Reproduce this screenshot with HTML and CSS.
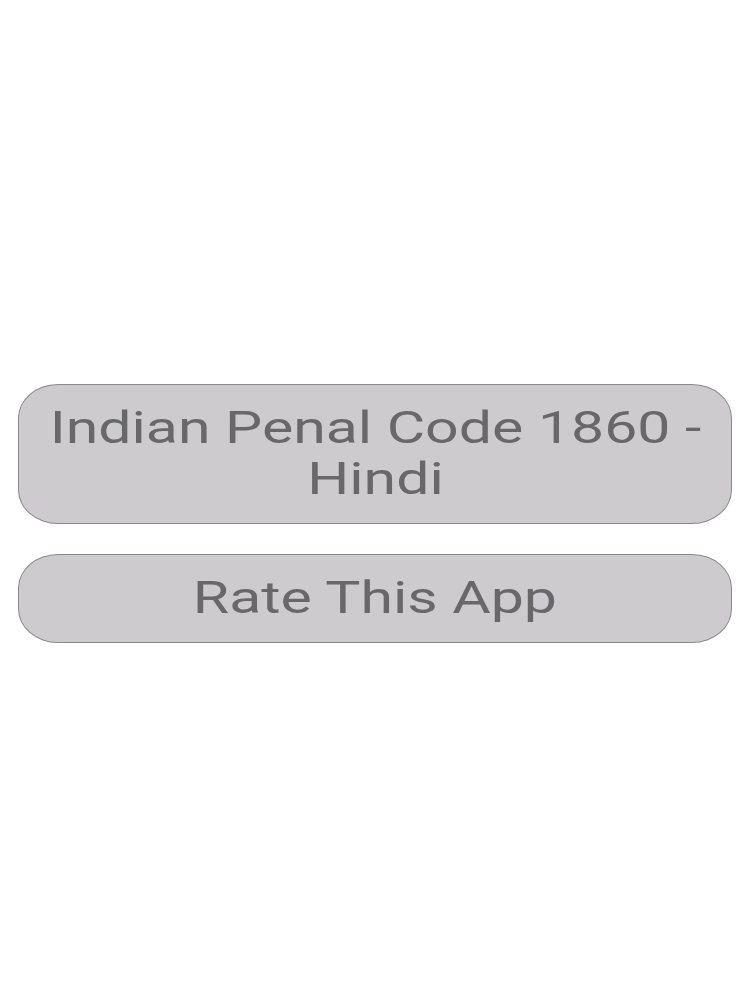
FILE: index.html
```html
<!DOCTYPE html>
<html>
<head>
<meta charset="utf-8">
<link rel="stylesheet" href="styles.css">
</head>
<body>
<div class="screen">
  <div class="menu">
    <div class="btn"><span class="label">Indian Penal Code 1860 - Hindi</span></div>
    <div class="btn"><span class="label">Rate This App</span></div>
  </div>
</div>
</body>
</html>
```
FILE: styles.css
```css
html, body {
  margin: 0;
  padding: 0;
  background: #ffffff;
}
.screen {
  width: 750px;
  height: 1000px;
  box-sizing: border-box;
  padding-top: 384px;
}
.menu {
  display: flex;
  flex-direction: column;
  gap: 30px;
  padding: 0 18px;
}
.btn {
  background: #cdcbce;
  border: 1.5px solid #8a8a8a;
  border-radius: 40px / 34px;
  color: #686868;
  font-family: Roboto, "Liberation Sans", sans-serif;
  font-size: 44px;
  line-height: 51px;
  text-align: center;
  padding: 18px 10px 18px;
  display: flex;
  justify-content: center;
}
.label {
  display: block;
  max-width: 505px;
  transform: scaleX(1.34);
  transform-origin: center;
}
```
